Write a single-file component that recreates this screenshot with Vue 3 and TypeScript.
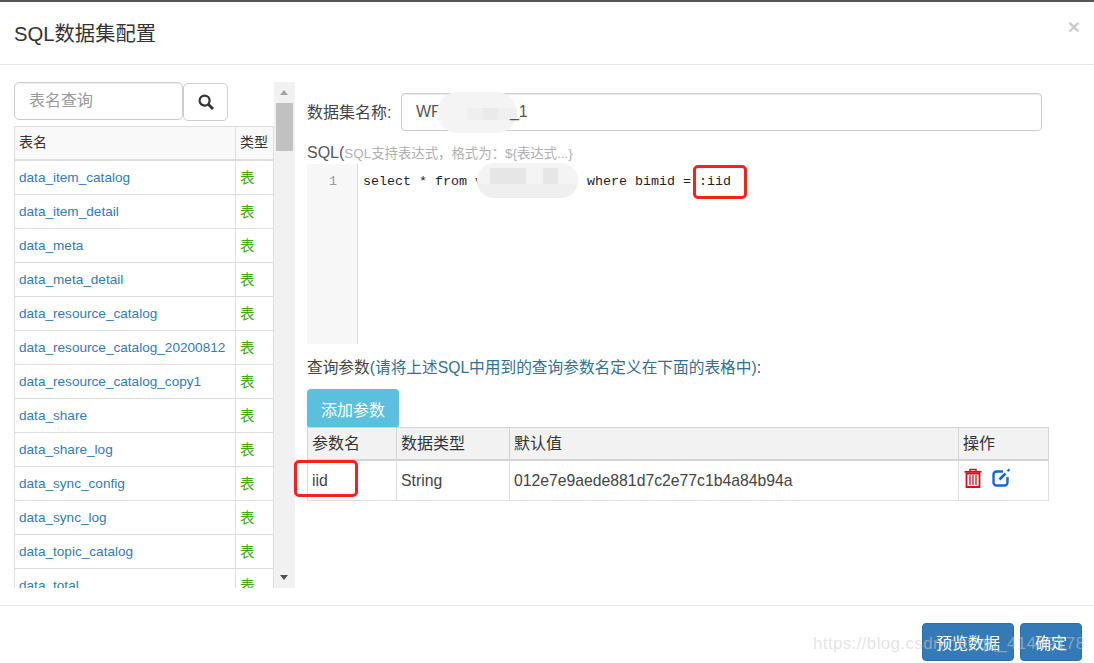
<script setup lang="ts">
const tables: string[] = [
  'data_item_catalog', 'data_item_detail', 'data_meta', 'data_meta_detail',
  'data_resource_catalog', 'data_resource_catalog_20200812', 'data_resource_catalog_copy1',
  'data_share', 'data_share_log', 'data_sync_config', 'data_sync_log', 'data_topic_catalog', 'data_total'
]
</script>

<template>
  <div class="page">
    <header class="head">
      <h4 class="title">SQL数据集配置</h4>
      <span class="close">×</span>
    </header>

    <main class="body">
      <aside class="side">
        <div class="side-scroll">
          <div class="search">
            <input class="search-input" placeholder="表名查询" />
            <button class="search-btn" aria-label="search">
              <svg width="16" height="16" viewBox="0 0 16 16" fill="none" stroke="#333" stroke-width="2.2">
                <circle cx="6.6" cy="6.6" r="5" />
                <path d="M10.3 10.3 15 15" stroke-width="2.8" />
              </svg>
            </button>
          </div>
          <table class="tbl">
            <colgroup><col class="c1" /><col class="c2" /></colgroup>
            <thead><tr><th>表名</th><th>类型</th></tr></thead>
            <tbody>
              <tr v-for="t in tables" :key="t">
                <td><a class="link">{{ t }}</a></td>
                <td class="kind">表</td>
              </tr>
            </tbody>
          </table>
        </div>
        <div class="bar">
          <span class="arrow up"></span>
          <span class="thumb"></span>
          <span class="arrow down"></span>
        </div>
      </aside>

      <section class="main">
        <div class="name-row">
          <label class="name-label">数据集名称:</label>
          <div class="name-input">
            <span>WF</span><span class="gap"></span><span class="tail">_1</span>
            <i class="blur blur-a"></i>
          </div>
        </div>
        <div class="sql-label">SQL(<span class="hint">SQL支持表达式，格式为：${表达式...}</span></div>
        <div class="editor">
          <div class="gutter">1</div>
          <div class="code">
            <span>select * from v</span><span class="code-gap"></span><span>where bimid = </span><span class="hl-wrap">:iid<i class="mark mark-a"></i></span>
            <i class="blur blur-b"></i>
          </div>
        </div>
        <div class="q-label">查询参数<span class="q-hint">(请将上述SQL中用到的查询参数名定义在下面的表格中)</span>:</div>
        <button class="add">添加参数</button>
        <table class="ptbl">
          <colgroup><col class="p1" /><col class="p2" /><col class="p3" /><col class="p4" /></colgroup>
          <thead><tr><th>参数名</th><th>数据类型</th><th>默认值</th><th>操作</th></tr></thead>
          <tbody>
            <tr>
              <td><span class="hl-wrap">iid<i class="mark mark-b"></i></span></td>
              <td>String</td>
              <td>012e7e9aede881d7c2e77c1b4a84b94a</td>
              <td class="ops">
                <svg width="18" height="20" viewBox="0 0 18 20" fill="none" stroke="#d0121b">
                  <path d="M6 3V1.5h6V3" stroke-width="1.5" />
                  <path d="M.5 3.8h17" stroke-width="1.8" />
                  <path d="M2.5 5.5h13V19h-13z" stroke-width="1.8" />
                  <path d="M6 7v10M9 7v10M12 7v10" stroke-width="1.3" />
                </svg>
                <svg width="19" height="19" viewBox="0 0 19 19" fill="none" stroke="#0f69d8">
                  <path d="M11 3.5H4.5a3 3 0 0 0-3 3v8a3 3 0 0 0 3 3h8a3 3 0 0 0 3-3V9" stroke-width="2.4" />
                  <path d="M7.5 11.5 13.5 5.5" stroke-width="2.6" />
                  <path d="M15.5 3.2 17.5 1.2" stroke-width="2.2" />
                </svg>
              </td>
            </tr>
          </tbody>
        </table>
      </section>
    </main>

    <footer class="foot">
      <button class="primary wide">预览数据</button>
      <button class="primary">确定</button>
      <span class="wm">https://blog.csdn.net/qq_41489178</span>
    </footer>
  </div>
</template>

<style>
html, body { margin: 0; background: #fff; }
</style>

<style scoped>
.page {
  width: 1094px;
  height: 663px;
  box-sizing: border-box;
  border-top: 2px solid #555;
  display: flex;
  flex-direction: column;
  overflow: hidden;
  position: relative;
  color: #333;
  font: 16px "Liberation Sans", "Noto Sans CJK SC", sans-serif;
}
.head {
  height: 63px;
  flex: none;
  box-sizing: border-box;
  border-bottom: 1px solid #e5e5e5;
  padding: 0 14px;
  display: flex;
  align-items: center;
  justify-content: space-between;
}
.title { margin: 2px 0 0; font-size: 20.3px; font-weight: 400; line-height: 26px; color: #333; }
.close {
  font-size: 21px; font-weight: 700; color: #000; opacity: .2; line-height: 21px;
  margin-top: -13px;
}
.body { flex: 1; display: flex; min-height: 0; }
.side {
  width: 295px; flex: none; box-sizing: border-box;
  padding: 17px 0 0 14px; height: 524px; display: flex;
}
.side-scroll { width: 260px; height: 506px; overflow: hidden; }
.search { display: flex; height: 44px; align-items: flex-start; }
.search-input {
  width: 169px; height: 38px; box-sizing: border-box;
  border: 1px solid #ccc; border-radius: 5px; padding: 0 14px;
  font: inherit; font-size: 16px; outline: none;
  box-shadow: inset 0 1px 1px rgba(0, 0, 0, .075);
}
.search-input::placeholder { color: #999; opacity: 1; }
.search-btn {
  width: 45px; height: 38px; margin-top: 1px; box-sizing: border-box;
  border: 1px solid #ccc; border-radius: 5px; background: #fff; padding: 0;
  display: flex; align-items: center; justify-content: center;
}
.tbl { border-collapse: collapse; table-layout: fixed; width: 259px; }
.c1 { width: 221px; } .c2 { width: 38px; }
.tbl th, .tbl td { border: 1px solid #ddd; padding: 0 4px; height: 33px; font-weight: 400; text-align: left; white-space: nowrap; overflow: hidden; }
.tbl th { background: #f9f9f9; height: 28px; padding-bottom: 4px; border-bottom-width: 2px; font-size: 14px; }
.tbl td { font-size: 13.6px; }
.link { color: #337ab7; }
.tbl td.kind { color: #44a800; font-size: 14.5px; padding-bottom: 2px; height: 31px; }
.bar {
  width: 21px; height: 506px; background: #f1f1f1; flex: none; display: flex;
  flex-direction: column; align-items: center; position: relative;
}
.thumb { position: absolute; top: 21px; left: 2px; width: 17px; height: 48px; background: #c1c1c1; }
.arrow { position: absolute; left: 6px; width: 0; height: 0; border-left: 4.5px solid transparent; border-right: 4.5px solid transparent; }
.arrow.up { top: 8px; border-bottom: 5px solid #a3a3a3; }
.arrow.down { bottom: 8px; border-top: 5px solid #505050; }
.main { flex: 1; box-sizing: border-box; padding: 28px 45px 0 12px; min-width: 0; }
.name-row { display: flex; align-items: center; height: 38px; width: 735px; }
.name-label { width: 94px; flex: none; font-size: 16px; color: #444; padding-bottom: 3px; }
.name-input {
  width: 641px; height: 38px; box-sizing: border-box; border: 1px solid #ccc; border-radius: 4px;
  padding: 0 14px; font-size: 16px; color: #555; line-height: 36px; display: flex; position: relative;
  box-shadow: inset 0 1px 1px rgba(0, 0, 0, .075);
}
.gap { width: 69px; }
.tail { position: relative; z-index: 1; }
.blur { position: absolute; display: block; background-color: #f4f4f4; background-repeat: no-repeat; }
.blur-a {
  left: 35px; top: -2px; width: 80px; height: 41px; border-radius: 22px;
  background-image: linear-gradient(#eaeaea, #eaeaea), linear-gradient(#efefef, #efefef);
  background-position: 46px 16px, 30px 16px;
  background-size: 15px 12px, 50px 12px;
}
.sql-label { margin-top: 11px; margin-bottom: 1px; height: 21px; font-size: 16px; line-height: 21px; color: #555; }
.hint { font-size: 13.4px; color: #b0b0b0; }
.editor { height: 180px; display: flex; }
.gutter {
  width: 28px; flex: none; background: #f7f7f7; border-right: 1px solid #ddd; padding-left: 22px;
  color: #999; font: 13.33px/36px "Liberation Mono", monospace;
}
.code {
  position: relative; padding-left: 5px; font: 13.33px/36px "Liberation Mono", monospace; color: #222; white-space: pre;
}
.code-gap { display: inline-block; width: 104px; }
.blur-b {
  left: 119px; top: -1px; width: 101px; height: 35px; border-radius: 17px;
  background-image: linear-gradient(#e6e6e6, #e6e6e6), linear-gradient(#e6e6e6, #e6e6e6), linear-gradient(#efefef, #efefef);
  background-position: 13px 5px, 66px 5px, 0 21px;
  background-size: 36px 16px, 15px 16px, 101px 14px;
}
.hl-wrap { position: relative; display: inline-block; }
.mark { position: absolute; display: block; border: 3px solid #f0241a; border-radius: 5px; box-sizing: border-box; }
.mark-a { left: -6px; top: 1px; width: 54px; height: 34px; }
.mark-b { left: -18px; top: -12px; width: 64px; height: 37px; }
.q-label { margin-top: 13px; height: 21px; line-height: 21px; font-size: 15.7px; color: #444; }
.q-hint { color: #31708f; }
.add {
  display: block; margin-top: 11px; width: 92px; height: 39px; border: 0; border-radius: 4px;
  background: #5bc0de; color: #fff; font: inherit; font-size: 16px; font-weight: 400; padding: 0;
}
.ptbl { border-collapse: collapse; table-layout: fixed; width: 741px; margin-top: -1px; }
.p1 { width: 89px; } .p2 { width: 113px; } .p3 { width: 449px; } .p4 { width: 90px; }
.ptbl th, .ptbl td { border: 1px solid #ddd; padding: 0 4px; font-weight: 400; text-align: left; white-space: nowrap; }
.ptbl th { background: #f2f2f2; height: 28px; padding-bottom: 3px; border-color: #d4d4d4; border-bottom-width: 2px; font-size: 16px; }
.ptbl td { height: 39px; font-size: 15.75px; color: #444; }
.ops svg { vertical-align: middle; margin-right: 10px; position: relative; top: -3px; left: 1px; }
.foot {
  height: 58px; flex: none; box-sizing: border-box; border-top: 1px solid #e5e5e5;
  padding: 17px 12px 0 0; display: flex; justify-content: flex-end; gap: 6px; position: relative;
}
.primary {
  height: 38px; border: 1px solid #2e6da4; border-radius: 4px; background: #337ab7; color: #fff;
  font: inherit; font-size: 16px; font-weight: 400; padding: 0 14px;
}
.primary.wide { padding: 0 13px; }
.wm {
  position: absolute; left: 813px; top: 28px; font-size: 17px; letter-spacing: .35px; color: rgba(205, 205, 205, .55);
  white-space: nowrap;
}
</style>
